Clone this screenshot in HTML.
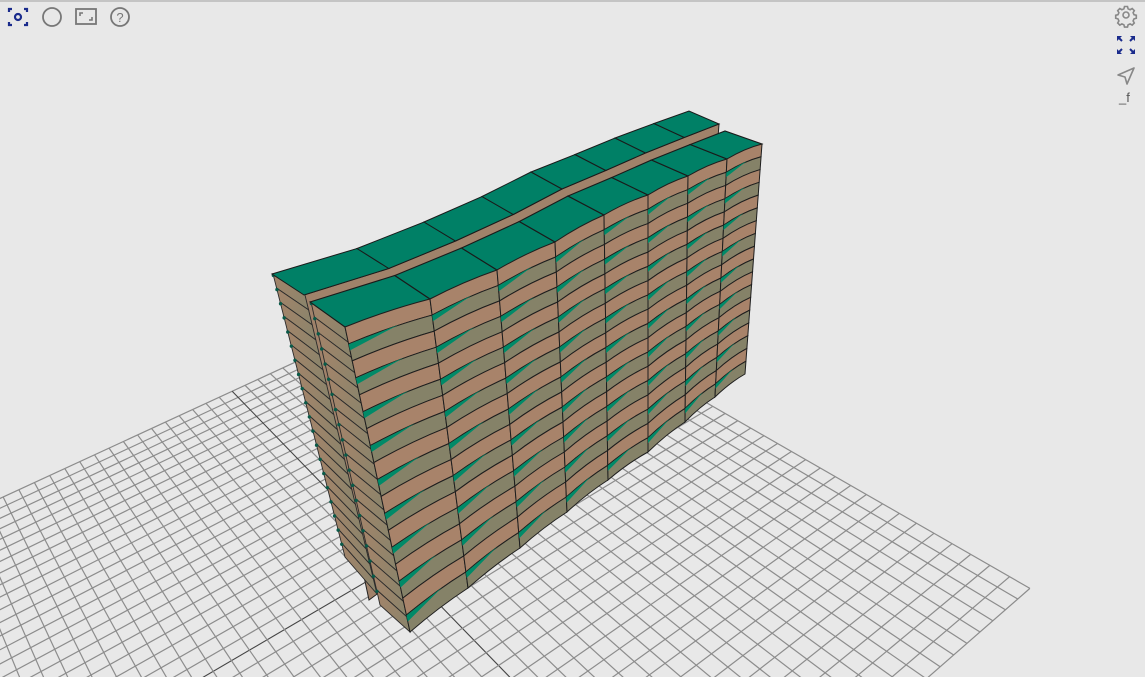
<!DOCTYPE html>
<html><head><meta charset="utf-8">
<style>
html,body{margin:0;padding:0;background:#e8e8e8;width:1145px;height:677px;overflow:hidden;font-family:"Liberation Sans",sans-serif}
#wrap{position:relative;width:1145px;height:677px;border-top:2px solid #c4c4c4;box-sizing:border-box;overflow:hidden}
svg{position:absolute;left:0;top:0}
.t{position:absolute;font-size:13px;color:#555}
</style></head><body>
<div id="wrap">
<svg id="s" width="1145" height="677" viewBox="0 0 1145 677">
<defs>
<linearGradient id="g2" x1="0" y1="0" x2="1" y2="1">
<stop offset="0" stop-color="#a5846a"/><stop offset="1" stop-color="#88846b"/>
</linearGradient>
</defs>
<g id="grid"></g>
<g id="wall"></g>
</svg>
<svg width="140" height="30" style="left:0;top:0">
<g fill="none" stroke="#1a2b8c" stroke-width="2.2">
<path d="M9 10V7h3M24 7h3v3M27 20v3h-3M12 23H9v-3"/>
<circle cx="18" cy="15" r="3"/>
</g>
<circle cx="52" cy="15" r="9" fill="none" stroke="#777" stroke-width="1.8"/>
<rect x="76" y="7" width="20" height="15" fill="none" stroke="#777" stroke-width="1.8"/>
<path d="M80 14v-3h3M92 15v3h-3" fill="none" stroke="#777" stroke-width="1.6"/>
<circle cx="120" cy="15" r="9" fill="none" stroke="#777" stroke-width="1.8"/>
<text x="120" y="20" font-size="13" text-anchor="middle" fill="#777" font-family="Liberation Sans">?</text>
</svg>
<svg width="40" height="90" style="left:1106px;top:0">
<g transform="translate(20,13)" fill="none" stroke="#888" stroke-width="1.6">
<circle r="3"/>
<path d="M-1.5 -8.5h3l.6 2.3 2 .9 2.1-1.2 2.1 2.1-1.2 2.1.9 2 2.3.6v3l-2.3.6-.9 2 1.2 2.1-2.1 2.1-2.1-1.2-2 .9-.6 2.3h-3l-.6-2.3-2-.9-2.1 1.2-2.1-2.1 1.2-2.1-.9-2-2.3-.6v-3l2.3-.6.9-2-1.2-2.1 2.1-2.1 2.1 1.2 2-.9z"/>
</g>
<g fill="#1a2b8c">
<path d="M11 34h5l-5 5z M29 34h-5l5 5z M11 52h5l-5-5z M29 52h-5l5-5z"/>
<path d="M12 35l4 4M28 35l-4 4M12 51l4-4M28 51l-4-4" stroke="#1a2b8c" stroke-width="2"/>
</g>
<path d="M12 73l16-7-7 16-2-7z" fill="none" stroke="#888" stroke-width="1.6" stroke-linejoin="round"/>
</svg>
<div class="t" style="left:1119px;top:88px">_f</div>
</div>
<script>
var NS="http://www.w3.org/2000/svg";
function el(p,tag,attrs){var e=document.createElementNS(NS,tag);for(var k in attrs)e.setAttribute(k,attrs[k]);p.appendChild(e);return e;}
function H(u,v){var a=-0.3985,b=-0.232,w=a*u+b*v+1;return [(a*u*-340+b*v*2403+484)/w,(a*u*-200+b*v*-613+273)/w];}
var grid=document.getElementById("grid"),N=44;
for(var i=0;i<=N;i++){
 var u=i/N,p=H(u,0),q=H(u,1),dark=(i==N/2);
 el(grid,"line",{x1:p[0],y1:p[1],x2:q[0],y2:q[1],stroke:dark?"#444":"#8c8c8c","stroke-width":dark?1.1:1.2});
 p=H(0,u);q=H(1,u);
 el(grid,"line",{x1:p[0],y1:p[1],x2:q[0],y2:q[1],stroke:dark?"#444":"#8c8c8c","stroke-width":dark?1.1:1.2});
}
var wall=document.getElementById("wall");
function L(a,b,t){return [a[0]+(b[0]-a[0])*t,a[1]+(b[1]-a[1])*t];}
function P(pts){return pts.map(function(p){return p[0].toFixed(1)+","+p[1].toFixed(1)}).join(" ");}
var TX=[345,430,497,555,604,648,688,727,762],TY=[325,297,268,240,213,193,174,157,142];
var BX=[410,468,520,567,608,648,685,715,745],BY=[630,586,546,510,478,450,420,395,372];
var T=TX.map(function(x,i){return [x,TY[i]]}),B=BX.map(function(x,i){return [x,BY[i]]});
var R=18;
function depth(i){var f=i/8;return [35+2*f,25-12*f];}
var off=[-6,-7];
var bT=T.map(function(p,i){var d=depth(i);return [p[0]-d[0]+off[0],p[1]-d[1]+off[1]]});
var bB=B.map(function(p,i){var d=depth(i);return [p[0]-d[0]+off[0],p[1]-d[1]+off[1]]});
el(wall,"polygon",{points:P(bT.concat(bB.slice().reverse())),fill:"#a0826a",stroke:"#222","stroke-width":1});
function side(A0,A1,B0,B1,rows,dots){
 for(var k=0;k<rows;k++){
  var a=L(A0,A1,k/rows),b=L(B0,B1,k/rows),a1=L(A0,A1,(k+1)/rows),b1=L(B0,B1,(k+1)/rows);
  el(wall,"polygon",{points:P([a,b,b1,a1]),fill:"url(#g2)",stroke:"#2a2a2a","stroke-width":0.9});
  if(dots){var m=L(a,a1,0.1);el(wall,"circle",{cx:m[0],cy:m[1],r:1.7,fill:"#0a5a48"});}
 }
}
side([273,272],[345,555],[305,293],[377,592],20,true);
for(var j=0;j<8;j++){
 var d0=[32,21],a=bT[j],b=bT[j+1];
 var a2=[a[0]-d0[0]+2*j/8,a[1]-d0[1]+8*j/8],b2=[b[0]-d0[0]+2*(j+1)/8,b[1]-d0[1]+8*(j+1)/8];
 el(wall,"polygon",{points:P([a2,b2,b,a]),fill:"#008066",stroke:"#1a1a1a","stroke-width":1});
}
side([311,300],[380,603],T[0],B[0],20,true);
for(var j=0;j<8;j++){
 var a=T[j],b=T[j+1],da=depth(j),db=depth(j+1);
 el(wall,"polygon",{points:P([[a[0]-da[0],a[1]-da[1]],[b[0]-db[0],b[1]-db[1]],b,a]),fill:"#008066",stroke:"#1a1a1a","stroke-width":1.1});
}
for(var j=0;j<8;j++){
 for(var k=0;k<R;k++){
  var t0=k/R,t1=(k+1)/R;
  var a=L(T[j],B[j],t0),b=L(T[j+1],B[j+1],t0),c=L(T[j+1],B[j+1],t1),d=L(T[j],B[j],t1);
  var mx=(a[0]+b[0])/2,my=(a[1]+b[1])/2-3;
  var mx2=(d[0]+c[0])/2,my2=(d[1]+c[1])/2-3;
  var odd=k%2==1;
  el(wall,"path",{d:"M"+a[0]+" "+a[1]+" Q"+mx+" "+my+" "+b[0]+" "+b[1]+" L"+c[0]+" "+c[1]+" Q"+mx2+" "+my2+" "+d[0]+" "+d[1]+"Z",fill:odd?"#858268":"#a8836a",stroke:"#1e1e1e","stroke-width":1});
  if(odd){
   var w0=L(a,d,0.02),w1=L(a,d,0.38),w2=L(L(a,b,0.6),L(d,c,0.6),0.03);w2[1]-=2.5;
   el(wall,"polygon",{points:P([w0,w2,w1]),fill:"#008a68"});
  }
 }
}
</script>
</body></html>
